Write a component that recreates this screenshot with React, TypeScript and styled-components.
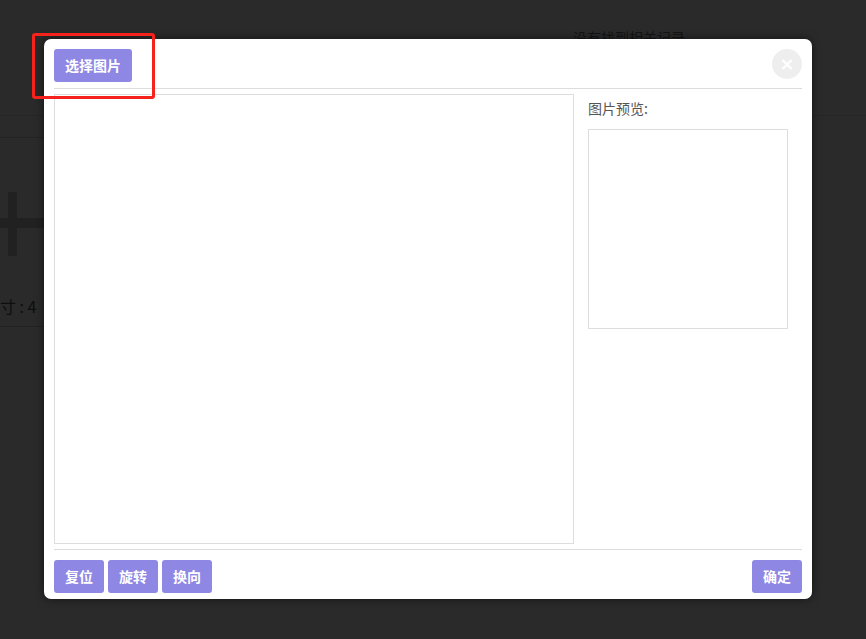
import styled, { createGlobalStyle } from 'styled-components';

const GlobalStyle = createGlobalStyle`
  html, body {
    margin: 0;
    padding: 0;
    background: #ffffff;
    font-family: "Noto Sans CJK SC", "Liberation Sans", sans-serif;
  }
`;

const Page = styled.div`
  position: relative;
  width: 866px;
  height: 639px;
  overflow: hidden;
  background: #ffffff;
`;

const PageTop = styled.div`
  height: 116px;
  border-bottom: 1px solid #e4e4e4;
  padding-left: 573px;
  box-sizing: border-box;
  padding-top: 27px;
  font-size: 14px;
  color: #7a7a7a;
`;

const PageSection = styled.div`
  height: 21px;
  border-bottom: 1px solid #dcdcdc;
  width: 60px;
`;

const PlusMark = styled.div`
  position: relative;
  margin-top: 54px;
  height: 64px;
  width: 60px;

  &::before,
  &::after {
    content: '';
    position: absolute;
    background: #c8c8c8;
  }
  &::before {
    left: 8px;
    top: 0;
    width: 9px;
    height: 64px;
  }
  &::after {
    left: -10px;
    top: 26px;
    width: 70px;
    height: 10px;
  }
`;

const SizeRow = styled.div`
  margin-top: 38px;
  width: 60px;
  font-size: 16px;
  color: #555;
  padding-bottom: 8px;
  border-bottom: 1px solid #cfcfcf;
  white-space: nowrap;
`;

const Overlay = styled.div`
  position: absolute;
  inset: 0;
  background: rgba(0, 0, 0, 0.835);
  padding: 39px 0 0 44px;
  box-sizing: border-box;
`;

const Modal = styled.div`
  width: 768px;
  height: 560px;
  background: #fff;
  border-radius: 7px;
  box-shadow: 0 0 8px rgba(0, 0, 0, 0.55);
  padding: 10px 10px 6px;
  box-sizing: border-box;
  display: flex;
  flex-direction: column;
`;

const Header = styled.div`
  display: flex;
  justify-content: space-between;
  align-items: flex-start;
  padding-bottom: 6px;
  border-bottom: 1px solid #dddddd;
`;

const ActionButton = styled.button`
  height: 33px;
  padding: 0 11px;
  border: none;
  border-radius: 3px;
  background: #8e87e3;
  color: #fff;
  font-family: "Noto Sans CJK SC", sans-serif;
  font-size: 14px;
  font-weight: 700;
  line-height: 33px;
  cursor: pointer;
`;

const CloseButton = styled.button`
  width: 30px;
  height: 30px;
  border-radius: 50%;
  border: none;
  background: #eeeeee;
  color: #fff;
  font-family: "DejaVu Sans", sans-serif;
  font-size: 18px;
  font-weight: 700;
  line-height: 30px;
  padding: 0;
  cursor: pointer;
`;

const Body = styled.div`
  display: flex;
  gap: 14px;
  padding: 5px 0;
  border-bottom: 1px solid #dddddd;
`;

const CropArea = styled.div`
  width: 520px;
  height: 450px;
  border: 1px solid #dddddd;
  box-sizing: border-box;
`;

const PreviewPanel = styled.div`
  display: flex;
  flex-direction: column;
`;

const PreviewLabel = styled.div`
  font-size: 14px;
  color: #555;
  line-height: 20px;
  margin-top: 4px;
  margin-bottom: 11px;
`;

const PreviewBox = styled.div`
  width: 200px;
  height: 200px;
  border: 1px solid #dddddd;
  box-sizing: border-box;
`;

const Footer = styled.div`
  display: flex;
  justify-content: space-between;
  padding-top: 10px;
`;

const ButtonGroup = styled.div`
  display: flex;
  gap: 4px;
`;

const Annotation = styled.div`
  position: absolute;
  left: 32px;
  top: 33px;
  width: 123px;
  height: 66px;
  border: 3px solid #f5231b;
  border-radius: 3px;
  box-sizing: border-box;
`;

const App = () => {
  return (
    <Page>
      <GlobalStyle />
      <PageTop>没有找到相关记录</PageTop>
      <PageSection />
      <PlusMark />
      <SizeRow>寸 : 4</SizeRow>

      <Overlay>
        <Modal>
          <Header>
            <ActionButton>选择图片</ActionButton>
            <CloseButton>×</CloseButton>
          </Header>
          <Body>
            <CropArea />
            <PreviewPanel>
              <PreviewLabel>图片预览:</PreviewLabel>
              <PreviewBox />
            </PreviewPanel>
          </Body>
          <Footer>
            <ButtonGroup>
              <ActionButton>复位</ActionButton>
              <ActionButton>旋转</ActionButton>
              <ActionButton>换向</ActionButton>
            </ButtonGroup>
            <ActionButton>确定</ActionButton>
          </Footer>
        </Modal>
      </Overlay>

      <Annotation />
    </Page>
  );
};

export default App;
